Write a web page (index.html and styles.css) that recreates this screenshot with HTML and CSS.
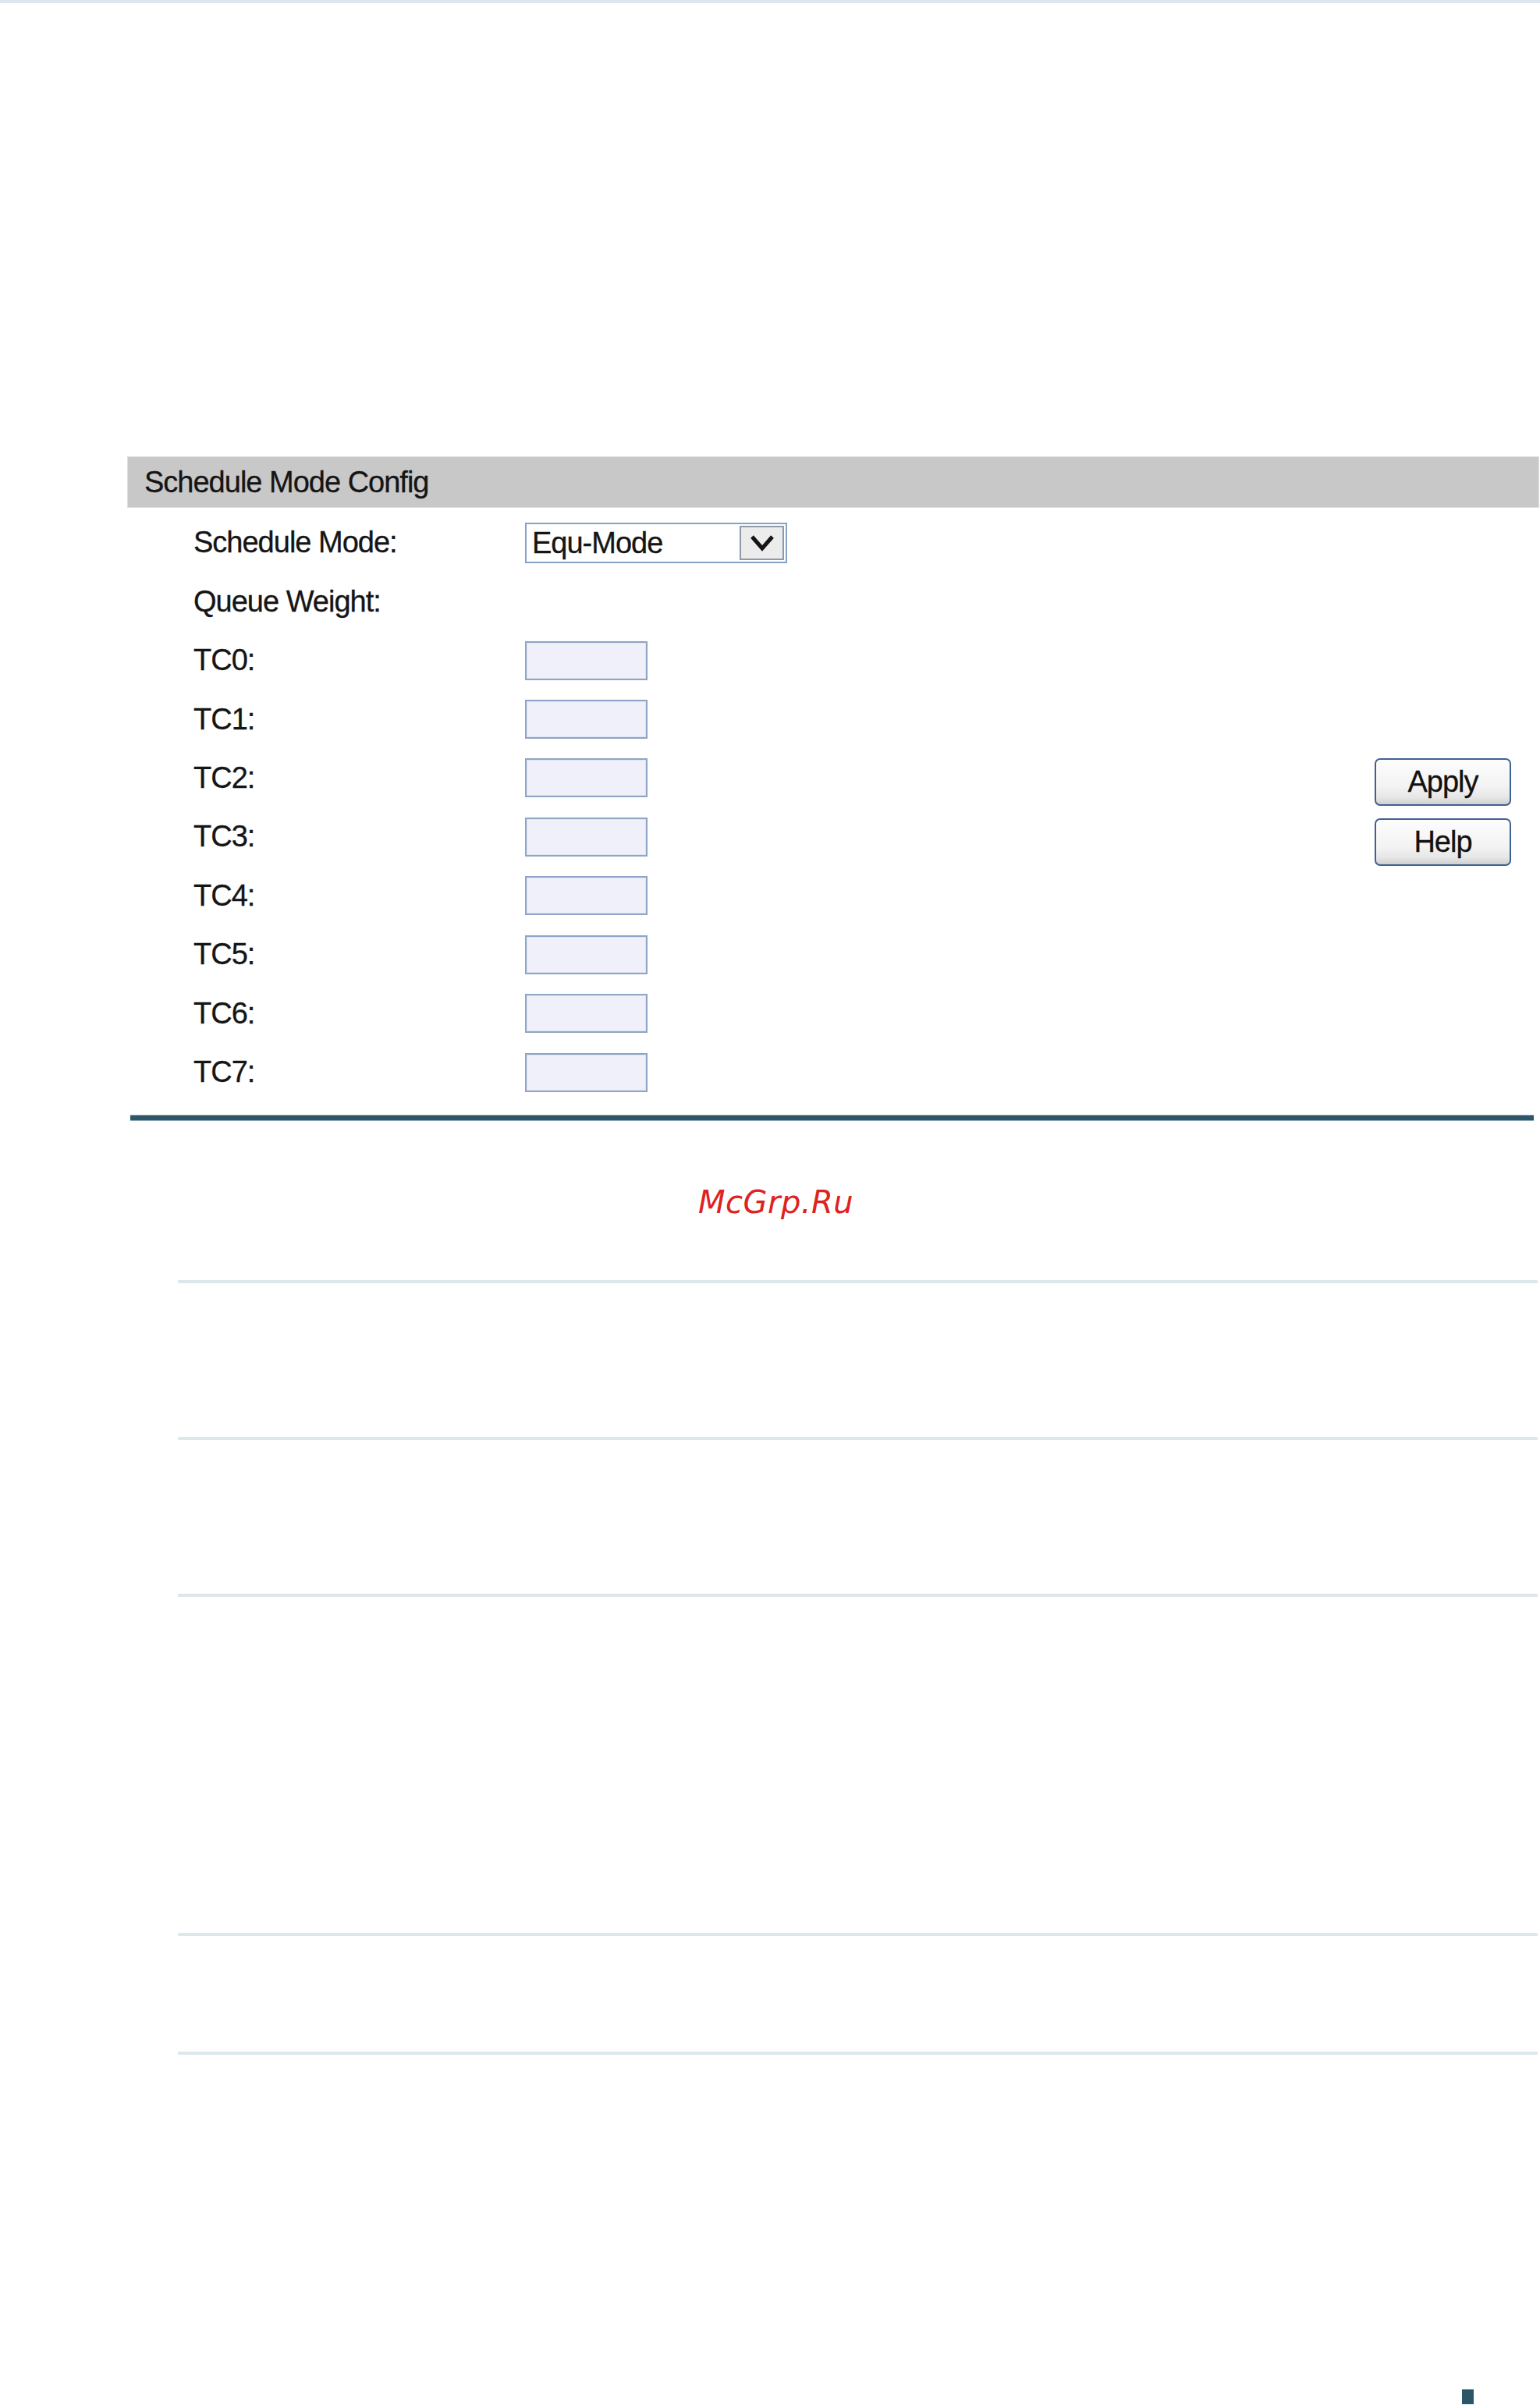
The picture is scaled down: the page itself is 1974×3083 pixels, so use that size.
FILE: index.html
```html
<!DOCTYPE html>
<html>
<head>
<meta charset="utf-8">
<title>Schedule Mode Config</title>
<link rel="stylesheet" href="styles.css">
</head>
<body>
<div class="topbar"></div>

<div class="panel">
  <div class="panel-head">Schedule Mode Config</div>
  <div class="panel-body">
    <div class="form">
      <div class="row">
        <span class="label">Schedule Mode:</span>
        <div class="select">
          <span class="select-text">Equ-Mode</span>
          <span class="select-btn">
            <svg width="34" height="26" viewBox="0 0 34 26"><polyline points="4,5 17,20 30,5" fill="none" stroke="#151515" stroke-width="5" stroke-linejoin="miter"/></svg>
          </span>
        </div>
      </div>
      <div class="row"><span class="label">Queue Weight:</span></div>
      <div class="row"><span class="label">TC0:</span><div class="field"></div></div>
      <div class="row"><span class="label">TC1:</span><div class="field"></div></div>
      <div class="row"><span class="label">TC2:</span><div class="field"></div></div>
      <div class="row"><span class="label">TC3:</span><div class="field"></div></div>
      <div class="row"><span class="label">TC4:</span><div class="field"></div></div>
      <div class="row"><span class="label">TC5:</span><div class="field"></div></div>
      <div class="row"><span class="label">TC6:</span><div class="field"></div></div>
      <div class="row"><span class="label">TC7:</span><div class="field"></div></div>
    </div>
    <div class="actions">
      <button class="btn">Apply</button>
      <button class="btn">Help</button>
    </div>
  </div>
</div>

<div class="rule"></div>

<div class="watermark">McGrp.Ru</div>

<div class="sep sep-1"></div>
<div class="sep sep-2"></div>
<div class="sep sep-3"></div>
<div class="sep sep-4"></div>
<div class="sep sep-5"></div>

<div class="corner"></div>
</body>
</html>
```

FILE: styles.css
```css
html, body {
  margin: 0;
  padding: 0;
  background: #ffffff;
}

body {
  font-family: "Liberation Sans", Arial, sans-serif;
  color: #151515;
  overflow: hidden;
}

.topbar {
  height: 4px;
  background: #dce6ec;
}

.panel {
  margin: 581px 1px 0 163px;
}

.panel-head {
  box-sizing: border-box;
  height: 66px;
  background: #c8c8c8;
  border: 1px solid #dedede;
  padding-left: 21px;
  font-size: 38px;
  letter-spacing: -1px;
  line-height: 64px;
  -webkit-text-stroke: 0.3px #151515;
}

.panel-body {
  display: flex;
  padding-top: 7px;
}

.form {
  flex: 1;
  padding-left: 85px;
}

.row {
  display: flex;
  align-items: center;
  height: 75.44px;
  font-size: 38px;
  letter-spacing: -1px;
  -webkit-text-stroke: 0.3px #151515;
}

.label {
  width: 425px;
  flex: none;
}

.select {
  box-sizing: border-box;
  width: 336px;
  height: 52px;
  border: 2px solid #86a2c4;
  background: #ffffff;
  display: flex;
  align-items: stretch;
  padding: 2px;
}

.select-text {
  flex: 1;
  padding-left: 5px;
  line-height: 44px;
}

.select-btn {
  box-sizing: border-box;
  width: 57px;
  background: #ececec;
  border: 2px solid #8f9aa8;
  display: flex;
  align-items: center;
  justify-content: center;
}

.field {
  box-sizing: border-box;
  width: 157px;
  height: 50px;
  border: 2px solid #8ea5c6;
  background: #eff0f9;
  box-shadow: inset 0 0 0 1px #dfe5f0;
}

.actions {
  display: flex;
  flex-direction: column;
  gap: 16px;
  padding-top: 314px;
  margin-right: 36px;
}

.btn {
  box-sizing: border-box;
  width: 175px;
  height: 61px;
  border: 2px solid #3f6192;
  border-radius: 7px;
  background: linear-gradient(#fdfdfd 0%, #f3f3f3 60%, #e6e6e6 85%, #cfcfcf 100%);
  font-family: "Liberation Sans", Arial, sans-serif;
  font-size: 38px;
  letter-spacing: -1px;
  color: #111111;
  -webkit-text-stroke: 0.3px #111111;
  padding: 0;
}

.rule {
  box-sizing: border-box;
  margin: 17px 8px 0 167px;
  height: 8px;
  background: #2e5668;
  border-top: 1px solid #8fa9b6;
  border-bottom: 1px solid #8fa9b6;
}

.watermark {
  margin: 84px 0 0 895px;
  font-family: "DejaVu Sans", Verdana, sans-serif;
  font-style: oblique;
  font-size: 40px;
  line-height: 40px;
  letter-spacing: 0.5px;
  color: #dd2222;
}

.sep {
  height: 4px;
  background: #dde8ec;
  margin-left: 228px;
  margin-right: 3px;
}

.sep-1 { margin-top: 80px; }
.sep-2 { margin-top: 197px; }
.sep-3 { margin-top: 197px; }
.sep-4 { margin-top: 431px; }
.sep-5 { margin-top: 148px; }

.corner {
  margin: 429px 0 0 1874px;
  width: 15px;
  height: 19px;
  background: #2a5668;
}
```
